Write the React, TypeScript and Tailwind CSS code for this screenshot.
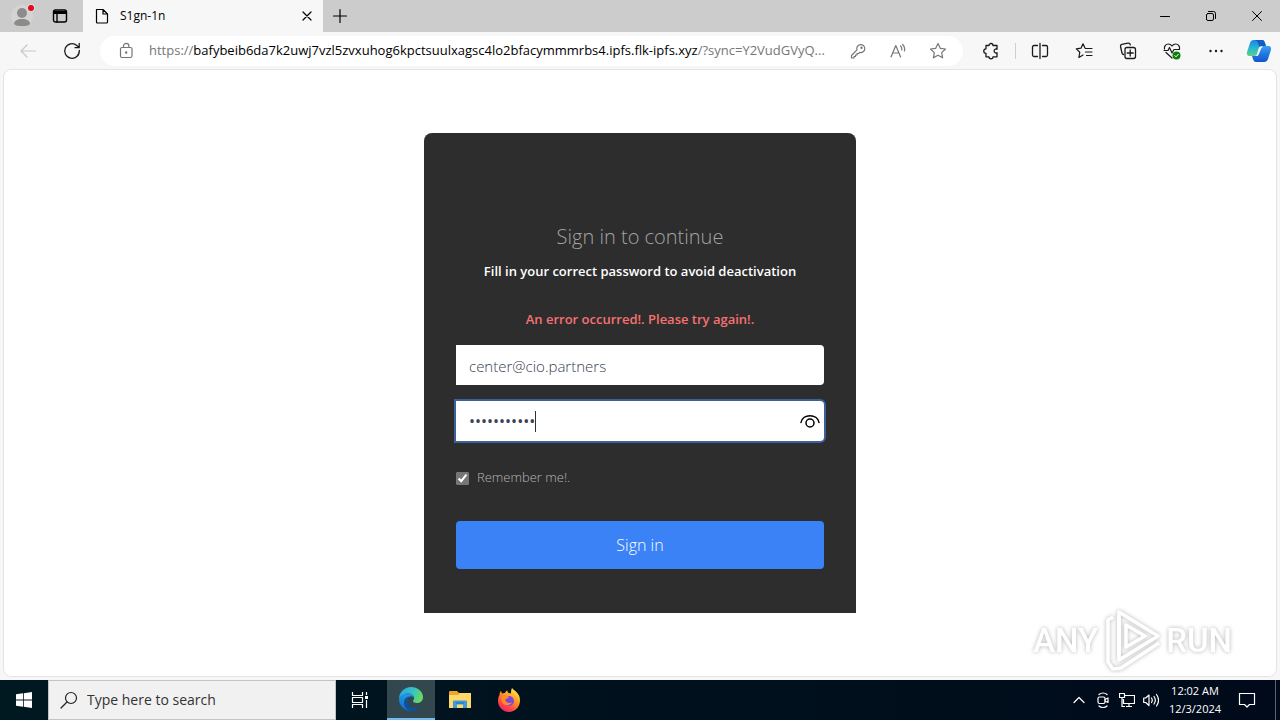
import { useState } from 'react'
import type { ReactNode, SVGProps } from 'react'

const EMAIL = 'center@cio.partners'

function Icon({ size = 18, children, ...props }: SVGProps<SVGSVGElement> & { size?: number }) {
  return (
    <svg
      width={size}
      height={size}
      viewBox={`0 0 ${size} ${size}`}
      fill="none"
      stroke="currentColor"
      strokeWidth="1.2"
      strokeLinecap="round"
      strokeLinejoin="round"
      aria-hidden
      {...props}
    >
      {children}
    </svg>
  )
}

function ToolButton({ label, className = '', children }: { label: string; className?: string; children: ReactNode }) {
  return (
    <button type="button" aria-label={label} className={`flex h-8 shrink-0 items-center justify-center ${className}`}>
      {children}
    </button>
  )
}

function TabStrip() {
  return (
    <header className="flex h-8 shrink-0 bg-[#cccccc] text-black">
      <ToolButton label="Profile" className="w-11">
        <Icon size={26} stroke="none">
          <circle cx="13" cy="13" r="11" fill="#d6d3d0" />
          <circle cx="13" cy="10" r="5" fill="#8c8c8c" />
          <path d="M5 21c0-3 3-5 8-5s8 2 8 5c-2 3-14 3-16 0Z" fill="#8c8c8c" />
          <circle cx="22" cy="5" r="4" fill="#d9d9d9" />
          <circle cx="22" cy="5" r="3" fill="#e00b1c" />
        </Icon>
      </ToolButton>
      <ToolButton label="Tab actions" className="mr-[7px] w-8">
        <Icon size={16}>
          <rect x="1.500" y="2" width="13" height="12" rx="2" strokeWidth="1.400" />
          <path d="M2 3.500h12v2H2z" fill="currentColor" />
          <path d="M5 5v9" strokeWidth="1.400" />
        </Icon>
      </ToolButton>
      <div className="flex w-60 items-center bg-[#f7f7f7] pl-[11px]">
        <Icon size={16}>
          <path d="M2.500 1.500h6.500l4.500 4.500v8a1 1 0 0 1-1 1h-9a1 1 0 0 1-1-1z M9 1.500V6h4.500" />
        </Icon>
        <span className="ml-[10px] flex-1 text-xs">S1gn-1n</span>
        <ToolButton label="Close tab" className="w-8">
          <Icon size={10}>
            <path d="M1 1l8 8M9 1L1 9" />
          </Icon>
        </ToolButton>
      </div>
      <ToolButton label="New tab" className="w-[34px]">
        <Icon size={16}>
          <path d="M8 1.500v13M1.500 8h13" />
        </Icon>
      </ToolButton>
      <div className="ml-auto flex">
        <ToolButton label="Minimize" className="w-[46px]">
          <Icon size={12}>
            <path d="M1.500 6.500h9" strokeWidth="1" />
          </Icon>
        </ToolButton>
        <ToolButton label="Restore" className="w-[46px]">
          <Icon size={12} strokeWidth="1">
            <rect x="1.500" y="3.500" width="7" height="7" rx="1.500" />
            <path d="M3.500 1.500h5a2 2 0 0 1 2 2v5" />
          </Icon>
        </ToolButton>
        <ToolButton label="Close" className="w-[46px]">
          <Icon size={12}>
            <path d="M1.500 1.500l9 9M10.500 1.500l-9 9" strokeWidth="1" />
          </Icon>
        </ToolButton>
      </div>
    </header>
  )
}

function Toolbar() {
  return (
    <div className="flex h-[37px] shrink-0 items-center bg-[#f7f7f7] pl-[6px] text-[#1a1a1a]">
      <ToolButton label="Back" className="w-11 text-[#c8c8c8]">
        <Icon>
          <path d="M16.500 9H2M8 3L2 9l6 6" />
        </Icon>
      </ToolButton>
      <ToolButton label="Refresh" className="w-11">
        <Icon strokeWidth="1.300">
          <path d="M16.300 8.500A7.300 7.300 0 1 1 13.800 3.500L16 5.500M16.200 1.500v4.200h-4.200" />
        </Icon>
      </ToolButton>
      <div className="ml-[6px] mr-[6px] flex h-[30px] min-w-0 flex-1 items-center rounded-full bg-white pl-4 pr-[5px] text-[#767676]">
        <Icon size={20} className="shrink-0">
          <rect x="4.500" y="6.500" width="11.500" height="10" rx="1.500" />
          <path d="M7.500 6.500V5a2.700 2.700 0 0 1 5.400 0v1.500" />
          <circle cx="10.200" cy="11.500" r=".6" fill="currentColor" />
        </Icon>
        <p className="ml-[13px] min-w-0 flex-1 truncate text-[13px]">
          https://
          <span className="text-black">bafybeib6da7k2uwj7vzl5zvxuhog6kpctsuulxagsc4lo2bfacymmmrbs4.ipfs.flk-ipfs.xyz</span>
          /?sync=Y2VudGVyQ...
        </p>
        <ToolButton label="Saved passwords" className="w-10">
          <Icon size={16}>
            <path d="M7 6.800a4 4 0 1 1 2.700 2.600L8.500 10.500H7V12H5.500v1.500H4V15H1.500v-2.500z" />
            <circle cx="11.500" cy="4.700" r=".6" />
          </Icon>
        </ToolButton>
        <ToolButton label="Read aloud" className="w-10">
          <Icon size={16}>
            <path d="M1 14L5.800 2.500L10.600 14M2.800 10h6M10.500 3a4 4 0 0 1 1.200 4M12.700 1.500a6.500 6.500 0 0 1 1.700 6.500" />
          </Icon>
        </ToolButton>
        <ToolButton label="Add to favorites" className="w-10">
          <Icon>
            <path d="M9 1.500l2.300 4.800 5.200.7-3.800 3.600.9 5.200L9 13.300l-4.600 2.500.9-5.200L1.500 7l5.200-.7z" />
          </Icon>
        </ToolButton>
      </div>
      <ToolButton label="Extensions" className="w-11">
        <Icon strokeWidth="1.300">
          <path d="M4 3.500h3a2 2 0 1 1 4 0h4v3.700a2 2 0 1 0 0 3.600v4h-4a2 2 0 1 1-4 0H4v-3.500a2 2 0 1 1 0-4.500z" />
        </Icon>
      </ToolButton>
      <span className="mx-[2px] h-4 w-px bg-[#cfcfcf]" />
      <ToolButton label="Split screen" className="w-11">
        <Icon strokeWidth="1.300">
          <path d="M6.500 3.500H3A1.500 1.500 0 0 0 1.500 5v8A1.500 1.500 0 0 0 3 14.500h3.500M11.500 3.500H15A1.500 1.500 0 0 1 16.500 5v8a1.500 1.500 0 0 1-1.500 1.500h-3.500M9 1.500v15" />
        </Icon>
      </ToolButton>
      <ToolButton label="Favorites" className="w-11">
        <Icon>
          <path d="M10 6L8 1.800 6 6.200l-4.700.7 3.500 3.300-.9 5.300L8 13M10.500 6.500h6.500M10.500 10h6.500M11.500 13.500H17" />
        </Icon>
      </ToolButton>
      <ToolButton label="Collections" className="w-11">
        <Icon strokeWidth="1.300">
          <path d="M4.500 12.500A2 2 0 0 1 3 11L1.500 4.500a2 2 0 0 1 1.300-2.200L9 1.200a2 2 0 0 1 2.300 1.600" />
          <rect x="6" y="5.500" width="10.500" height="11" rx="2" />
          <path d="M11.200 8v6M8.200 11h6" />
        </Icon>
      </ToolButton>
      <ToolButton label="Browser essentials" className="w-11">
        <Icon>
          <path d="M1.500 7C1 4 3 2 5.200 2S8.500 3.300 9 4c.5-.7 1.600-2 3.800-2s4.200 2 3.700 5M3 10.500l6 5.500M1 8.500h4l1.500-3L9 11l2-3.500h5.500" />
          <circle cx="13.500" cy="13.500" r="4" fill="#107c10" stroke="none" />
          <path d="M11.800 13.600l1.200 1.200 2.300-2.500" stroke="#fff" strokeWidth="1" />
        </Icon>
      </ToolButton>
      <ToolButton label="Settings and more" className="w-11">
        <Icon stroke="none" fill="currentColor">
          <circle cx="3.500" cy="9" r="1.200" />
          <circle cx="9" cy="9" r="1.200" />
          <circle cx="14.500" cy="9" r="1.200" />
        </Icon>
      </ToolButton>
      <ToolButton label="Copilot" className="w-[42px]">
        <Icon size={26} stroke="none">
          <defs>
            <linearGradient id="cpLeft" x1="0" y1="0" x2="0" y2="1">
              <stop offset="0" stopColor="#1683e8" />
              <stop offset=".5" stopColor="#27b6d2" />
              <stop offset="1" stopColor="#5bd08c" />
            </linearGradient>
            <linearGradient id="cpRight" x1="0" y1="0" x2="0" y2="1">
              <stop offset="0" stopColor="#3d9fee" />
              <stop offset=".5" stopColor="#2079e4" />
              <stop offset="1" stopColor="#1455cf" />
            </linearGradient>
          </defs>
          <path d="M8 2h8c2 0 2.500 1.500 3 3l1 3h-4c-2 0-3 1-3.500 3L11 16c-.6 1.500-1.500 2-3 2H4c-3 0-3.500-2-2.800-4.500L4 5c.6-2 2-3 4-3z" fill="url(#cpLeft)" />
          <path d="M18 24h-8c-2 0-2.500-1.500-3-3l-1-3h3c2 0 3-1 3.500-3L15 10c.6-1.500 1.500-2 3-2h4c3 0 3.500 2 2.800 4.500L22 21c-.6 2-2 3-4 3z" fill="url(#cpRight)" />
          <path d="M8 2h8c2 0 2.500 1.500 3 3l1 3h-4c-1 0-2 .3-2.600 1L12 5c-.7-2-2-3-4-3z" fill="#155bc4" />
          <path d="M13.800 9h3c-1 .5-1.500 1-1.800 2l-2.300 5.500c-.5 1-1.200 1.500-2 1.500H9c1.500-.3 2-1 2.300-2l1.500-5z" fill="#eef6fb" />
        </Icon>
      </ToolButton>
    </div>
  )
}

function SignInForm() {
  const [email, setEmail] = useState(EMAIL)
  const [password, setPassword] = useState('***********')
  const [visible, setVisible] = useState(false)

  return (
    <form
      onSubmit={(e) => e.preventDefault()}
      className="mx-auto mt-[63px] w-full max-w-[432px] rounded-t-lg bg-[#2d2d2d] px-8 pb-11 pt-[88px]"
    >
      <h1 className="text-center text-xl leading-8 font-light text-[#a3a3a3]">Sign in to continue</h1>
      <p className="mt-[6px] text-center text-[13px] leading-6 font-semibold text-white">
        Fill in your correct password to avoid deactivation
      </p>
      <p className="mt-6 text-center text-[13px] leading-6 font-semibold text-[#f87171]">
        An error occurred!. Please try again!.
      </p>
      <input
        type="email"
        aria-label="Email"
        value={email}
        onChange={(e) => setEmail(e.target.value)}
        className="mt-[14px] block h-10 w-full rounded-r-sm bg-white px-[13px] pt-[2px] text-[15px] font-light text-[#374151] outline-none"
      />
      <div className="relative mt-4">
        <input
          type={visible ? 'text' : 'password'}
          aria-label="Password"
          value={password}
          onChange={(e) => setPassword(e.target.value)}
          className="block h-10 w-full rounded-r-sm bg-white pl-[13px] pr-10 text-base text-[#374151] caret-transparent ring-2 ring-[#3b5f9f] outline-none"
        />
        <span className="absolute left-[79px] top-[10px] h-[21px] w-px bg-[#333333]" />
        <button
          type="button"
          aria-label="Show password"
          onClick={() => setVisible(!visible)}
          className="absolute right-1 top-[10px] text-black"
        >
          <Icon size={20} strokeWidth="1.500">
            <path d="M1 11.500c1.500-9 16.500-9 18 0" />
            <circle cx="10" cy="12" r="4" />
          </Icon>
        </button>
      </div>
      <label className="mt-[25px] flex h-6 items-center text-[13px] font-light text-[#b5b5b5]">
        <input type="checkbox" defaultChecked className="mr-2 size-[13px] accent-[#767676]" />
        Remember me!.
      </label>
      <button type="submit" className="mt-[31px] h-12 w-full rounded-sm bg-[#3b82f6] text-base font-light text-white">
        Sign in
      </button>
    </form>
  )
}

function Watermark() {
  return (
    <div
      className="pointer-events-none absolute bottom-1 right-11 flex items-center text-white drop-shadow-[0_0_2px_rgba(0,0,0,0.3)]"
      aria-label="ANY RUN"
    >
      <span className="font-['Roboto',sans-serif] text-[33px] leading-none font-medium">ANY</span>
      <svg
        width="60"
        height="64"
        viewBox="0 0 60 64"
        fill="none"
        stroke="currentColor"
        strokeWidth="3.500"
        strokeLinejoin="round"
        className="ml-1"
        aria-hidden
      >
        <path d="M17 4L56 28L17 52z" />
        <path d="M17 4v48M24 17v22l19-11z" />
        <path d="M11 9L6 12v42l5 7 8-1 38-25" />
      </svg>
      <span className="ml-1 font-['Roboto',sans-serif] text-[33px] leading-none font-medium">RUN</span>
    </div>
  )
}

function EdgeIcon() {
  return (
    <Icon size={24} stroke="none">
      <defs>
        <linearGradient id="edTop" x1="0" y1=".3" x2="1" y2=".6">
          <stop offset="0" stopColor="#2aa5df" />
          <stop offset=".5" stopColor="#35c1c9" />
          <stop offset="1" stopColor="#6bdc57" />
        </linearGradient>
        <linearGradient id="edLow" x1="0" y1="0" x2="0" y2="1">
          <stop offset="0" stopColor="#1f9ae6" />
          <stop offset="1" stopColor="#0f6cc4" />
        </linearGradient>
      </defs>
      <path d="M0 12C0 5 5.500 0 12 0s12 4.500 12 10c0 4-3 6-6 6-2.500 0-4-1-4-2 0-.6 1-1 1-3 0-2.500-2.500-4.500-6-4.500C4.500 6.500 1 9 0 12z" fill="url(#edTop)" />
      <path d="M0 12c1-4 4.500-5.500 9-5.500 3.500 0 6 2 6 4.500 0-1-3-2.500-5-1-1.500 1-2 2.500-2 4 0 5 3.500 9.500 6 9.800C6 25 0 19 0 12z" fill="url(#edLow)" />
      <path d="M10.500 9.500C9 10.500 8 12.500 8 14c0 4 4 7 8.500 7 2 0 4.200-.8 5.500-1.800C20 22 16.500 24 12.500 24 8 24 5 19.500 5 16c0-3.500 2-6 5.500-6.500z" fill="#0d519e" />
    </Icon>
  )
}

function FolderIcon() {
  return (
    <Icon size={22} stroke="none">
      <path d="M0 3a1 1 0 0 1 1-1h7l2 2h11a1 1 0 0 1 1 1v14H0z" fill="#e9a72b" />
      <path d="M0 6h9l2-2h11v15H0z" fill="#ffd867" />
      <path d="M4 12.500a1 1 0 0 1 1-1h12a1 1 0 0 1 1 1V19h-4v-3.500H8V19H4z" fill="#3f9be0" />
      <path d="M7 13.500h8v1H7z" fill="#1b6fb5" />
    </Icon>
  )
}

function FirefoxIcon() {
  return (
    <Icon size={24} stroke="none">
      <defs>
        <linearGradient id="ffBody" x1=".8" y1="0" x2=".2" y2="1">
          <stop offset="0" stopColor="#fff04a" />
          <stop offset=".4" stopColor="#ff9a22" />
          <stop offset=".75" stopColor="#ff4348" />
          <stop offset="1" stopColor="#e51a78" />
        </linearGradient>
      </defs>
      <path d="M2.500 7c0-2 .8-3.500 1.500-4l1 2.500C6 5 7 4.800 8 5c.5-1.500 1.500-2.300 2.500-2.600-.3 1 .2 2 1.500 2.600l2 .5C14 3.500 14 2 15 0c1.500 2 4.500 3.500 6 6 1.500 2 2 4 2 6.500C23 19 18 24 12 24S1 19 1 13c0-2.500.5-4.500 1.500-6z" fill="url(#ffBody)" />
      <circle cx="12" cy="13" r="5" fill="#7b47dd" />
      <path d="M4 9c3-2 6-2 8 0-1 1.500-3 1.500-4 2.500 1 3.500 4 4 7 3-2 4-9 3.500-10-1z" fill="#ff8a26" />
    </Icon>
  )
}

function Taskbar() {
  return (
    <footer className="flex h-10 shrink-0 bg-linear-to-r from-[#001820] to-[#000a1a] text-white">
      <button type="button" aria-label="Start" className="flex w-12 items-center justify-center">
        <Icon size={16} stroke="none" fill="currentColor">
          <path d="M0 2.300L7 1.300v6.300H0zM7.800 1.200L16 0v7.600H7.800zM0 8.400h7v6.300l-7-1zM7.800 8.400H16V16l-8.200-1.200z" />
        </Icon>
      </button>
      <label className="flex w-72 items-center border border-[#c4c4c4] bg-[#f1f1f1] pl-[11px] text-[#222222]">
        <Icon>
          <circle cx="11" cy="7" r="5.500" />
          <path d="M7 11l-6 6" />
        </Icon>
        <input
          type="search"
          aria-label="Search"
          placeholder="Type here to search"
          className="ml-[9px] min-w-0 flex-1 bg-transparent text-sm outline-none placeholder:text-[#333333]"
        />
      </label>
      <button type="button" aria-label="Task view" className="mr-[3px] flex w-12 items-center justify-center">
        <Icon size={18} strokeLinecap="butt">
          <path d="M1.500 1v3.500h10V1M1.500 17v-3.500h10V17M1.500 6.500h10v5h-10zM15.500 1v3M15.500 9v8" />
          <path d="M14 5h3v3h-3z" fill="currentColor" stroke="none" />
        </Icon>
      </button>
      <button type="button" aria-label="Microsoft Edge" className="flex w-12 items-center justify-center border-b-2 border-[#76b9ed] bg-[#33474e]">
        <EdgeIcon />
      </button>
      <button type="button" aria-label="File Explorer" className="flex w-[49px] items-center justify-center">
        <FolderIcon />
      </button>
      <button type="button" aria-label="Firefox" className="flex w-[49px] items-center justify-center">
        <FirefoxIcon />
      </button>
      <div className="ml-auto flex items-center">
        <ToolButton label="Show hidden icons" className="w-6">
          <Icon size={12}>
            <path d="M1 8.500l5-5 5 5" />
          </Icon>
        </ToolButton>
        <ToolButton label="Meet now" className="w-6">
          <Icon size={16}>
            <rect x="3" y="5" width="7" height="6.500" rx="1.500" />
            <path d="M10 7.500l3-1.500v4.500l-3-1.500M4 2.500c2-2 6-2 8 0M4 14c2 2 6 2 8 0" />
          </Icon>
        </ToolButton>
        <ToolButton label="Network" className="w-6">
          <Icon size={16} strokeLinecap="butt">
            <path d="M6 3.500h9.500v8H4.500V7M7 14.500h6M10 11.500v3M.5 1.500h5v4h-5zM3 5.500v9h3" />
          </Icon>
        </ToolButton>
        <ToolButton label="Volume" className="w-6">
          <Icon size={16}>
            <path d="M.7 6v4.500h2L6 13.500V3L2.700 6zM8.500 6c1 1.500 1 3 0 4.500M11 4.500c1.700 2.300 1.700 5 0 7.500M13.500 2.500c2.500 3.500 2.500 8 0 11.500" />
          </Icon>
        </ToolButton>
        <div className="w-16 text-center text-[11px] leading-[18px]">
          <div>12:02 AM</div>
          <div>12/3/2024</div>
        </div>
        <ToolButton label="Notifications" className="w-10">
          <Icon size={18}>
            <path d="M1.500 2.500h15v11h-5L9 16l-2.500-2.500h-5z" />
          </Icon>
        </ToolButton>
        <span className="ml-2 h-10 w-[5px] border-l border-[#5c6470]" />
      </div>
    </footer>
  )
}

export default function App() {
  return (
    <div className="flex h-screen flex-col overflow-hidden bg-[#f7f7f7] font-['Open_Sans',sans-serif]">
      <TabStrip />
      <Toolbar />
      <main className="relative mx-[3px] mb-[3px] flex-1 overflow-hidden rounded-lg border border-[#e4e4e4] bg-white">
        <SignInForm />
        <Watermark />
      </main>
      <Taskbar />
    </div>
  )
}
